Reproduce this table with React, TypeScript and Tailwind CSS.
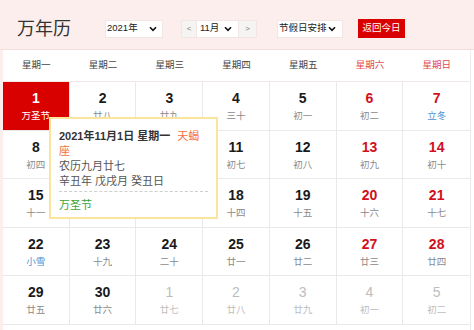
import React from "react";

type Cell = { d: string; l: string; sel?: boolean; we?: boolean; term?: boolean; o?: boolean };

const rows: Cell[][] = [
  [
    { d: "1", l: "万圣节", sel: true },
    { d: "2", l: "廿八" },
    { d: "3", l: "廿九" },
    { d: "4", l: "三十" },
    { d: "5", l: "初一" },
    { d: "6", l: "初二", we: true },
    { d: "7", l: "立冬", we: true, term: true },
  ],
  [
    { d: "8", l: "初四" },
    { d: "9", l: "初五" },
    { d: "10", l: "初六" },
    { d: "11", l: "初七" },
    { d: "12", l: "初八" },
    { d: "13", l: "初九", we: true },
    { d: "14", l: "初十", we: true },
  ],
  [
    { d: "15", l: "十一" },
    { d: "16", l: "十二" },
    { d: "17", l: "十三" },
    { d: "18", l: "十四" },
    { d: "19", l: "十五" },
    { d: "20", l: "十六", we: true },
    { d: "21", l: "十七", we: true },
  ],
  [
    { d: "22", l: "小雪", term: true },
    { d: "23", l: "十九" },
    { d: "24", l: "二十" },
    { d: "25", l: "廿一" },
    { d: "26", l: "廿二" },
    { d: "27", l: "廿三", we: true },
    { d: "28", l: "廿四", we: true },
  ],
  [
    { d: "29", l: "廿五" },
    { d: "30", l: "廿六" },
    { d: "1", l: "廿七", o: true },
    { d: "2", l: "廿八", o: true },
    { d: "3", l: "廿九", o: true },
    { d: "4", l: "初一", o: true },
    { d: "5", l: "初二", o: true },
  ],
];

const weekdays = ["星期一", "星期二", "星期三", "星期四", "星期五", "星期六", "星期日"];

function Chevron() {
  return (
    <svg width="8" height="6" viewBox="0 0 8 6" className="shrink-0">
      <polyline points="1,1.2 4,4.4 7,1.2" fill="none" stroke="#111" strokeWidth="1.6" />
    </svg>
  );
}

export default function App() {
  return (
    <div className="relative w-[474px] h-[330px] overflow-hidden bg-white [font-family:'Liberation_Sans','Noto_Sans_CJK_SC',sans-serif]">
      {/* header */}
      <div className="h-[50px] bg-[#fbeeec] border-b border-[#f4dedb] flex items-center pt-[8px] pl-[17px]">
        <div className="text-[18px] leading-none text-[#333] w-[88px]">万年历</div>
        <div className="w-[58px] h-[18px] bg-white border border-[#f1e6e4] flex items-center justify-between pl-[1px] pr-[5px] text-[9.5px] text-[#222]">
          <span>2021年</span>
          <Chevron />
        </div>
        <div className="ml-[18px] flex h-[18px]">
          <div className="w-[16px] bg-[#f6f3f3] border border-[#f1e6e4] flex items-center justify-center text-[8px] text-[#777]">&lt;</div>
          <div className="w-[41px] bg-white border-y border-[#f1e6e4] flex items-center justify-between pl-[3px] pr-[6px] text-[9.5px] text-[#222]">
            <span>11月</span>
            <Chevron />
          </div>
          <div className="w-[19px] bg-[#f6f3f3] border border-[#f1e6e4] flex items-center justify-center text-[8px] text-[#777]">&gt;</div>
        </div>
        <div className="ml-[20px] w-[66px] h-[18px] bg-white border border-[#f1e6e4] flex items-center justify-between pl-[1px] pr-[6px] text-[9.5px] text-[#222]">
          <span>节假日安排</span>
          <Chevron />
        </div>
        <div className="ml-[15px] w-[47px] h-[19px] bg-[#d90000] flex items-center justify-center text-[9.5px] text-white">
          返回今日
        </div>
      </div>

      <div className="flex">
        <div className="w-[3px] h-[280px] bg-[#fbeeec]" />
        <div className="w-[468px] border-r border-[#ececec]">
          <div className="h-[31px] grid grid-cols-7 items-center">
            {weekdays.map((w, i) => (
              <div
                key={w}
                className={`text-center text-[9.5px] ${i >= 5 ? "text-[#e2474c]" : "text-[#444]"}`}
              >
                {w}
              </div>
            ))}
          </div>
          <div className="border-t border-[#f3e6e6] grid grid-cols-7">
            {rows.flat().map((c, i) => {
              const col = i % 7;
              let numColor = "text-[#1a1a1a]";
              let lunColor = "text-[#8a8a8a]";
              if (c.we) numColor = "text-[#d1101b]";
              if (c.term) lunColor = "text-[#4b94d2]";
              if (c.o) {
                numColor = "text-[#bdbdbd] font-normal";
                lunColor = "text-[#bdbdbd]";
              }
              if (c.sel) {
                numColor = "text-white";
                lunColor = "text-white";
              }
              return (
                <div
                  key={i}
                  className={`h-[48.6px] border-b border-[#e9e9e9] ${col < 6 ? "border-r" : ""} flex flex-col items-center pt-[8px] ${
                    c.sel ? "bg-[#d90000] border-[#d90000]" : ""
                  }`}
                >
                  <div className={`text-[14px] leading-[16px] font-bold ${numColor}`}>{c.d}</div>
                  <div className={`mt-[4px] text-[9.5px] leading-[12px] ${lunColor}`}>{c.l}</div>
                </div>
              );
            })}
          </div>
        </div>
      </div>

      {/* tooltip */}
      <div className="absolute left-[49px] top-[117px] w-[169px] h-[102px] bg-white border-2 border-[#fbe59c] pl-[8px] pr-[8px] pt-[10px]">
        <div className="text-[11px] leading-[15px] whitespace-nowrap">
          <span className="font-bold text-[#333]">2021年11月1日 星期一</span>
          <span className="ml-[7px] text-[#f5703e]">天蝎</span>
        </div>
        <div className="text-[11px] leading-[15px] text-[#f5703e]">座</div>
        <div className="text-[11px] leading-[15px] text-[#555]">农历九月廿七</div>
        <div className="text-[11px] leading-[15px] text-[#555]">辛丑年 戊戌月 癸丑日</div>
        <div className="mt-[1.5px] border-t border-dashed border-[#cfcfcf]" />
        <div className="pt-[6px] text-[11px] leading-[15px] text-[#3aa23a]">万圣节</div>
      </div>
    </div>
  );
}
